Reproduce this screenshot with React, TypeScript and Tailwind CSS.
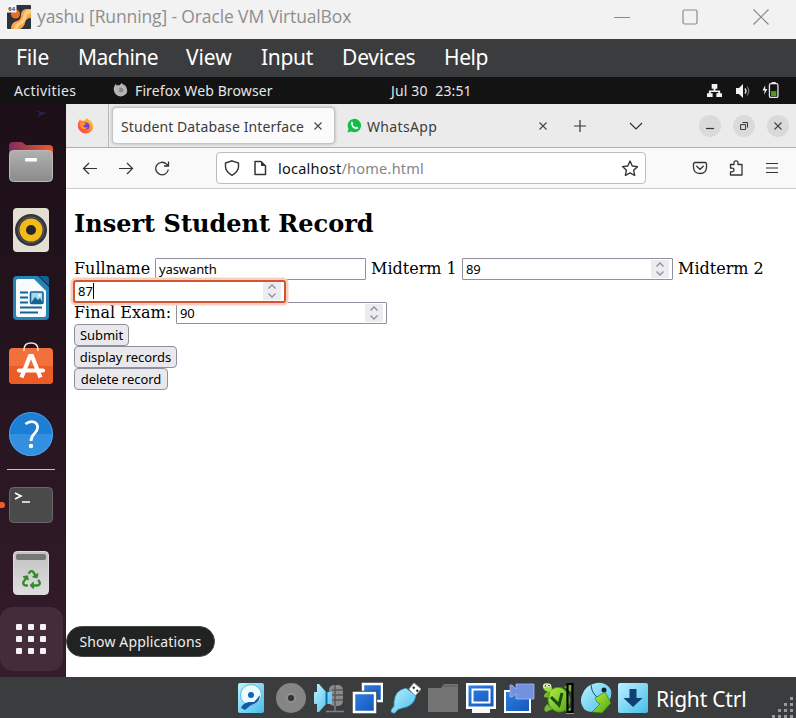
import React from 'react';
import { FaRecycle } from 'react-icons/fa';

const ui = "font-['Noto_Sans','Liberation_Sans',sans-serif]";

const Icon = ({ size = 16, box = 16, children, className = '' }: { size?: number; box?: number; children: React.ReactNode; className?: string }) => (
  <svg width={size} height={size} viewBox={`0 0 ${box} ${box}`} fill="none" className={`shrink-0 ${className}`}>
    {children}
  </svg>
);

function TitleBar() {
  return (
    <div className="flex h-[39px] items-center bg-[#f2f2f2] pb-[6px] text-[#8e8e8e]">
      <Icon size={24} box={24} className="ml-[7px]">
        <rect width="24" height="24" rx="1" fill="#2b3340" />
        <path d="M4 24Q4 17 10 16Q14 15 14 10Q14 5 19 4H24V13Q19 13 18 18Q17 22 13 24Z" fill="#f6a544" />
        <path d="M7 24Q7 19 12 17.500Q16 15 16.500 10Q17 6 20 5L24 4.500V8Q20 9 19 14Q17 19 13 20Q11 21 10.500 24Z" fill="#ffcb84" />
        <circle cx="8.500" cy="9" r="4.500" fill="#ee6c22" />
        <rect width="9.500" height="7.500" fill="#f8f8f8" />
        <text x="1.300" y="6" fontSize="6" fontWeight="bold" fill="#333" fontFamily="Liberation Sans">64</text>
      </Icon>
      <span className="ml-[6px] w-[560px] whitespace-nowrap font-['Open_Sans','Noto_Sans',sans-serif] text-[17.500px] tracking-[-0.13px]">yashu [Running] - Oracle VM VirtualBox</span>
      <div className="ml-[17px] flex items-center">
        <Icon size={16}><path d="M0 8.500H16" stroke="#8a8a8a" /></Icon>
        <Icon size={16} className="ml-[52px]"><rect x="1" y="1" width="14" height="14" rx="1.500" stroke="#8a8a8a" strokeWidth="1.200" /></Icon>
        <Icon size={16} className="ml-[55px]"><path d="M.5.5l15 15M15.500.5l-15 15" stroke="#8a8a8a" strokeWidth="1.200" /></Icon>
      </div>
    </div>
  );
}

function MenuBar() {
  return (
    <div className={`flex h-[38px] items-center whitespace-nowrap bg-[#3b3c3d] pl-4 text-[21px] text-white ${ui}`}>
      <span className="w-[62px] tracking-[-0.1px]">File</span>
      <span className="w-[108px] tracking-[-0.600px]">Machine</span>
      <span className="w-[75px] tracking-[-0.1px]">View</span>
      <span className="w-[81px] tracking-[-0.3px]">Input</span>
      <span className="w-[102px] tracking-[-0.2px]">Devices</span>
      <span className="tracking-[-0.4px]">Help</span>
    </div>
  );
}

function TopBar() {
  return (
    <div className={`flex h-[27px] items-center whitespace-nowrap bg-[#131313] text-[14px] text-[#e6e6e6] ${ui}`}>
      <span className="ml-[14px] w-[99px] tracking-[0.4px]">Activities</span>
      <Icon size={15} box={17} className="mb-[2px]">
        <path d="M1 6L3 2L4 4Q6 3 7 4L10 1Q11 3 14 4Q18 10 14.500 14Q11 17.500 6 16Q0 13 1 6Z" fill="#b5b5b5" />
        <path d="M6 7Q9 5 11 7.500T10 12Q7 12 6 10L8.500 8.500Z" fill="#858585" />
      </Icon>
      <span className="ml-[7px] w-[256px] tracking-[0.12px]">Firefox Web Browser</span>
      <span className="w-[316px] whitespace-pre tracking-[0.15px]">Jul 30  23:51</span>
      <Icon size={15}>
        <path d="M5 1h6v5H9v2h5v3h2v4h-6v-4h2V9.500H4V11h2v4H0v-4h2V8h5V6H5z" fill="#f2f2f2" />
      </Icon>
      <Icon size={16} className="ml-[13px]">
        <path d="M1 5h3l4-4v14l-4-4H1z" fill="#f2f2f2" />
        <path d="M10 5.500q2 2.500 0 5" stroke="#ddd" strokeWidth="1.400" />
        <path d="M12 3.500q3.500 4.500 0 9" stroke="#777" strokeWidth="1.200" />
      </Icon>
      <Icon size={17} className="mb-[2px] ml-[11px]">
        <path d="M3 4L.5 9H2.500L2 13L5 7.500H3Z" fill="#f2f2f2" />
        <rect x="7" y="2.500" width="8" height="13" rx="1.500" stroke="#e8e8e8" strokeWidth="1.200" />
        <path d="M9 1h4v1H9z" fill="#eee" />
        <rect x="8.500" y="9.500" width="5" height="4.700" fill="#4e9a26" />
      </Icon>
    </div>
  );
}

const Slot = ({ children }: { children: React.ReactNode }) => (
  <div className="flex h-[68px] w-[62px] items-center justify-center">{children}</div>
);

function Dock() {
  return (
    <div className="flex w-[66px] shrink-0 flex-col bg-linear-to-b from-[#1c0f17] via-[#25141f] to-[#351d2c]">
      <div className="flex h-6 justify-center pl-4 pt-[3px]">
        <Icon size={16}><path d="M0 3L14 6L4 10L7 6Z" fill="#25234d" /></Icon>
      </div>
      <Slot>
        <Icon size={48} box={48}>
          <defs>
            <linearGradient id="ft"><stop stopColor="#7e2d5e" /><stop offset="1" stopColor="#ef5a2a" /></linearGradient>
            <linearGradient id="fb" x2="0" y2="1"><stop stopColor="#b0b0b0" /><stop offset="1" stopColor="#8b8b8b" /></linearGradient>
          </defs>
          <path d="M2 18V8q0-4 4-4h8q2 0 3 1.500L19 7h23q4 0 4 4v7z" fill="url(#ft)" />
          <rect x="2.500" y="12.500" width="43" height="31" rx="4" fill="url(#fb)" stroke="#bbb" />
          <rect x="18" y="20" width="12" height="3.500" rx="1" fill="#fff" />
        </Icon>
      </Slot>
      <Slot>
        <Icon size={48} box={48}>
          <rect x="6" y="2" width="36" height="44" rx="4" fill="#e4dfd3" />
          <circle cx="24" cy="24" r="16" fill="#35363c" />
          <circle cx="24" cy="24" r="13" stroke="#595b62" strokeWidth="1" />
          <circle cx="24" cy="24" r="11.500" fill="#f2bb18" />
          <circle cx="24" cy="24" r="5" fill="#26272c" />
        </Icon>
      </Slot>
      <Slot>
        <Icon size={48} box={48}>
          <path d="M10 2H31L42 13V42q0 4-4 4H10q-4 0-4-4V6q0-4 4-4z" fill="#2683b5" />
          <path d="M11 5H27L39 17V41q0 2-2 2H11q-2 0-2-2V7q0-2 2-2z" fill="#f8fbfd" />
          <path d="M32 2H39q3 0 3 3V12z" fill="#13608f" />
          <path d="M13 18.500h8M13 23.500h8M13 28.500h8M13 33.500h22M13 38.500h18" stroke="#146394" strokeWidth="1.800" />
          <rect x="23.500" y="18" width="12.500" height="11.500" rx="1" fill="#a9d7ef" stroke="#146394" strokeWidth="1.600" />
          <path d="M24 29l4-6 3 3 2-2 3 5z" fill="#146394" /><circle cx="32.500" cy="21.500" r="1.200" fill="#fff" />
        </Icon>
      </Slot>
      <Slot>
        <Icon size={48} box={48}>
          <rect x="2" y="6" width="44" height="36" rx="4" fill="#f2703b" />
          <path d="M2 24H46V38q0 4-4 4H6q-4 0-4-4z" fill="#ec5c27" />
          <path d="M17 9V7.500q0-6.500 7-6.500T31 7.500V9" stroke="#ffe1d0" strokeWidth="1.500" />
          <path d="M14.500 35.500L23 14h2L33.500 35.500" stroke="#fff" strokeWidth="4.200" />
          <path d="M12 28.500H36" stroke="#fff" strokeWidth="4.200" strokeLinecap="round" />
        </Icon>
      </Slot>
      <Slot>
        <Icon size={48} box={48}>
          <circle cx="24" cy="24" r="22" fill="#1d7ed6" />
          <path d="M2 24a22 22 0 0044 0z" fill="#3390e0" />
          <circle cx="24" cy="24" r="21.500" stroke="#62aeea" strokeOpacity=".6" />
          <path d="M18.500 14Q23 10.500 27 12T30.500 18C30.500 23.500 24 23.500 24 31" stroke="#fff" strokeWidth="2.800" />
          <circle cx="24" cy="36" r="2.200" fill="#fff" />
        </Icon>
      </Slot>
      <div className="h-[3px] pl-[7px] pt-px"><div className="h-px w-12 bg-[#c9c0c6]" /></div>
      <div className="flex h-[68px] w-[62px] items-center">
        <div className="mr-[2px] h-[6px] w-[5px] shrink-0 rounded-r-full bg-[#ee5a2a]" />
        <Icon size={48} box={48}>
          <rect x="2.500" y="6.500" width="43" height="35" rx="4" fill="#4a4a4a" stroke="#686868" />
          <path d="M8 12l6 3-6 3M15 21h8" stroke="#fff" strokeWidth="1.600" />
        </Icon>
      </div>
      <Slot>
        <div className="flex h-11 w-9 flex-col items-center rounded-[4px] border border-[#dcdcdc] bg-linear-to-b from-[#c2c2c2] to-[#dedede] pt-[2px]">
          <div className="h-[6px] w-[30px] rounded-[2px] bg-[#777]" />
          <FaRecycle className="mt-[10px] text-[#358a2d]" size={19} />
        </div>
      </Slot>
      <div className="flex h-16 w-[63px] items-center justify-center rounded-[13px] bg-[#432d3b] pr-[2px]">
        <div className="grid grid-cols-3 gap-[6px]">
          {Array.from({ length: 9 }, (_, i) => <div key={i} className="size-[6px] rounded-[1px] bg-[#f5f2f4]" />)}
        </div>
      </div>
    </div>
  );
}

const Cross = ({ className = '' }) => <Icon size={8} box={8} className={className}><path d="M.5.5l7 7M7.500.5l-7 7" stroke="#444" strokeWidth="1.100" /></Icon>;

function FirefoxLogo() {
  return (
    <Icon size={17} box={17} className="ml-[11px]">
      <defs><linearGradient id="fx" x1="1" x2="0" y2="1"><stop stopColor="#ffe34a" /><stop offset=".45" stopColor="#ff8a26" /><stop offset="1" stopColor="#f42b5d" /></linearGradient></defs>
      <path d="M1 6L3 2L4 4Q6 3 7 4L10 1Q11 3 14 4Q18 10 14.500 14Q11 17.500 6 16Q0 13 1 6Z" fill="url(#fx)" />
      <circle cx="9" cy="9" r="3.500" fill="#7a3fd0" />
      <path d="M3 6q3-1 6 1-1 1-3 1.500 1 3 5 1.500-2 3-5.500 2Q3 10 3 6z" fill="#ff9634" />
    </Icon>
  );
}

const Round = ({ children, className }: { children: React.ReactNode; className: string }) => (
  <div className={`flex size-[22px] shrink-0 items-center justify-center rounded-full bg-[#dadada] ${className}`}>{children}</div>
);

function Tabs() {
  return (
    <div className={`flex h-11 items-center whitespace-nowrap border-b border-[#b1b1b1] bg-[#ebebeb] text-[14px] text-[#3c3c3f] ${ui}`}>
      <FirefoxLogo />
      <div className="ml-[14px] h-full w-px shrink-0 bg-[#b9b9b9]" />
      <div className="ml-[3px] flex h-[37px] w-[223px] shrink-0 items-center rounded-[4px] border border-[#c4c4c4] bg-[#fbfbfb] pl-2 shadow-[0_0_3px_#aaa]">
        <span className="w-[193px] pt-px tracking-[0.1px]">Student Database Interface</span>
        <Cross />
      </div>
      <Icon size={15} box={15} className="ml-[12px]">
        <path d="M.5 14.500L1.500 10.800A6.700 6.700 0 1 1 4.300 13.500Z" fill="#12bd48" />
        <path d="M4 5Q4 3.500 5.200 3.500L6.300 5.800L5.600 6.800Q6.500 8.600 8.200 9.300L9.200 8.400L11.300 9.500Q11.200 11.300 9.300 11.300Q4.200 10.500 4 5Z" fill="#fff" />
      </Icon>
      <span className="ml-[5px] w-[172px] pt-px tracking-[0.35px]">WhatsApp</span>
      <Cross />
      <Icon size={12} box={12} className="ml-[27px]"><path d="M6 0v12M0 6h12" stroke="#333" strokeWidth="1.200" /></Icon>
      <Icon size={14} box={14} className="ml-[43px]"><path d="M1 4l6 6 6-6" stroke="#333" strokeWidth="1.200" /></Icon>
      <Round className="ml-[56px]"><Icon size={8} box={8}><path d="M0 6.500h8" stroke="#333" strokeWidth="1.200" /></Icon></Round>
      <Round className="ml-3"><Icon size={8} box={8}><path d="M.6 2.600h5v5h-5zM2.500.5h5v5" stroke="#333" /></Icon></Round>
      <Round className="ml-3"><Cross /></Round>
    </div>
  );
}

function Toolbar() {
  return (
    <div className={`flex h-[41px] items-center border-b border-[#ccc] bg-[#f9f9fa] text-[14.500px] text-[#2b2a33] ${ui}`}>
      <Icon className="ml-4"><path d="M15 8.500H1.500M7 3L1.500 8.500L7 14" stroke="#333" strokeWidth="1.200" /></Icon>
      <Icon className="ml-5"><path d="M1 8.500h13.500M9 3L14.500 8.500L9 14" stroke="#333" strokeWidth="1.200" /></Icon>
      <Icon className="ml-5"><path d="M14.300 9.500A6.300 6.300 0 1 1 12.500 4.100L14 5.500M14.500 1.500V6H10" stroke="#333" strokeWidth="1.300" /></Icon>
      <div className="ml-[46px] flex h-8 w-[430px] shrink-0 items-center rounded-[4px] border border-[#bcbcc0] bg-white">
        <Icon className="ml-[7px]"><path d="M8 .8L14.500 3V7Q14 12 8 15.300Q2 12 1.500 7V3Z" stroke="#333" strokeWidth="1.400" /></Icon>
        <Icon className="ml-[12px]"><path d="M3 1.500H9L13.500 6V14.500H3Z" stroke="#333" strokeWidth="1.500" strokeLinejoin="round" /><path d="M9 1v5h5z" fill="#333" /></Icon>
        <span className="ml-[10px] w-[343px] whitespace-nowrap pt-px tracking-[0.24px] text-[#858585]"><span className="text-[#111]">localhost</span>/home.html</span>
        <Icon size={17}><path d="M8.500 1l2.100 4.600 5 .6-3.700 3.400 1 5L8.500 12.100 4.100 14.600l1-5L1.400 6.200l5-.6z" stroke="#333" strokeWidth="1.300" strokeLinejoin="round" /></Icon>
      </div>
      <Icon className="ml-[46px]"><path d="M3 2.500H13Q14.500 2.500 14.500 4V7Q14.500 13.500 8 13.500T1.500 7V4Q1.500 2.500 3 2.500Z" stroke="#333" strokeWidth="1.300" /><path d="M4.700 6.300L8 9.300l3.300-3" stroke="#333" strokeWidth="1.300" strokeLinecap="round" /></Icon>
      <Icon className="ml-[20px]"><path d="M2.500 4.500H6V3Q6 .9 8 .9T10 3V4.500h4V15H2.500V11.800H4.200Q6 11.800 6 10T4.200 8.200H2.500Z" stroke="#333" strokeWidth="1.300" strokeLinejoin="round" /></Icon>
      <Icon className="ml-[20px]"><path d="M2 3.500h12M2 8h12M2 12.500h12" stroke="#333" strokeWidth="1.200" /></Icon>
    </div>
  );
}

const Spinner = () => (
  <span className="flex h-[18px] w-[18px] shrink-0 items-center justify-center bg-[#ececf0]">
    <Icon size={14} box={14}><path d="M3.500 4.500L7 1l3.500 3.500M3.500 9.500L7 13l3.500-3.500" stroke="#8f8f9d" strokeWidth="1.300" /></Icon>
  </span>
);

function Field({ value, number, focus }: { value: string; number?: boolean; focus?: boolean }) {
  return (
    <span className={focus
      ? `relative z-10 -ml-px flex h-[23px] w-[213px] shrink-0 items-center rounded-[3px] border-2 border-[#cf5730] bg-white pl-[3px] pr-[3px] text-[13px] text-black shadow-[0_0_0_2.500px_#f9cdbf] ${ui}`
      : `flex h-[22px] w-[211px] shrink-0 items-center rounded-[1px] border border-[#8f8f9d] bg-white pl-[3px] pr-[3px] text-[13px] text-black ${ui}`}>
      <span className={focus ? 'border-r border-black leading-[16px]' : 'pt-[1px] leading-[17px] tracking-[-0.1px]'}>{value}</span>
      <span className="grow" />
      {number && <Spinner />}
    </span>
  );
}

const Button = ({ label, width }: { label: string; width: string }) => (
  <button className={`flex h-[22px] items-center justify-center whitespace-nowrap rounded-[4px] border border-[#8f8f9d] bg-[#e9e9ed] pt-[2px] text-[13px] tracking-[-0.05px] text-black ${width} ${ui}`}>{label}</button>
);

function Page() {
  return (
    <div className="flex grow flex-col bg-white pl-2 font-['DejaVu_Serif',serif] text-base text-black">
      <h2 className="mt-[21px] h-12 text-[24px] font-bold leading-[28px]">Insert Student Record</h2>
      <div className="flex h-[22px] items-center whitespace-nowrap">
        <span className="w-[81px]">Fullname</span>
        <Field value="yaswanth" />
        <span className="ml-[5px] w-[91px]">Midterm 1</span>
        <Field value="89" number />
        <span className="ml-[5px]">Midterm 2</span>
      </div>
      <div className="flex h-[22px] items-center"><Field value="87" number focus /></div>
      <div className="flex h-[22px] items-center whitespace-nowrap"><span className="w-[102px]">Final Exam:</span><Field value="90" number /></div>
      <Button label="Submit" width="w-[55px]" />
      <Button label="display records" width="w-[103px]" />
      <Button label="delete record" width="w-[94px]" />
    </div>
  );
}

const Status = ({ children }: { children: React.ReactNode }) => (
  <div className="flex w-[38.200px] shrink-0 items-center justify-center"><Icon size={32} box={32}>{children}</Icon></div>
);

function StatusBar() {
  return (
    <div className={`flex h-[41px] items-center bg-[#3b3c3d] pl-[233px] text-white ${ui}`}>
      <svg width="0" height="0"><defs>
        <linearGradient id="sky" x2="1" y2="1"><stop stopColor="#bdf2ff" /><stop offset="1" stopColor="#45bdea" /></linearGradient>
        <linearGradient id="blue" x2="1" y2="1"><stop stopColor="#3080df" /><stop offset="1" stopColor="#1256bf" /></linearGradient>
        <linearGradient id="lime" x2="1" y2="1"><stop stopColor="#b6ef45" /><stop offset="1" stopColor="#4ea611" /></linearGradient>
      </defs></svg>
      <Status><rect x="2" y="1" width="26" height="30" rx="2" fill="url(#sky)" /><circle cx="15" cy="13" r="10.500" fill="#e9fcff" stroke="#61b8dc" /><circle cx="15" cy="13" r="3" fill="#1665b5" /><path d="M24 13Q24 21 15 23L9 28L5 26Q7 21 13 20L18 20Q21 17 24 13Z" fill="#1557a8" /></Status>
      <Status><circle cx="17" cy="16" r="15" fill="#858585" /><circle cx="17" cy="16" r="3" fill="#333" /><circle cx="17" cy="16" r="4.500" stroke="#999" /></Status>
      <Status><g transform="translate(1)"><rect x="16" y="3" width="14" height="21" rx="5" fill="#8b8b8b" /><path d="M19 8h11M19 13h11M19 18h11M22 3v21" stroke="#5a5a5a" strokeWidth="1.500" /><path d="M22 24v5M13 29.500h18" stroke="#808080" strokeWidth="1.500" /><path d="M1 11q0-1 1-1h2V2h2l7 8h6v12h-6l-7 8H4v-8H2q-1 0-1-1z" fill="url(#sky)" /><path d="M13.500 10v12" stroke="#1769a5" strokeWidth="2" /></g></Status>
      <Status><g transform="translate(1)"><rect x="11" y="2" width="19" height="17" fill="url(#blue)" stroke="#fff" strokeWidth="2.500" /><rect x="2" y="11" width="21" height="19" stroke="#3b3c3d" strokeWidth="4.500" /><rect x="2" y="11" width="21" height="19" fill="url(#blue)" stroke="#fff" strokeWidth="2.500" /></g></Status>
      <Status><path d="M20 7l5-6 7 6-6 7z" fill="#fff" stroke="#aaa" /><path d="M24 5l1.500 1.500M27.500 8l1.500 1.500" stroke="#222" strokeWidth="2" /><path d="M17 6L27 14Q25 24 14 26L9 27.500L6 31Q2 32 2 28L5 24V20Q6 8 17 6Z" fill="url(#sky)" stroke="#278ab5" strokeWidth=".7" /></Status>
      <Status><path d="M1 6h13l3-4h14v28H1z" fill="#747474" /><path d="M17 3h13v2H16z" fill="#666" /></Status>
      <Status><rect x="1" y="1" width="30" height="26" fill="#fff" /><rect x="3.500" y="3.500" width="25" height="21" fill="url(#blue)" /><rect x="7.500" y="7.500" width="17" height="13" stroke="#fff" strokeWidth="2" /><path d="M7 27h18v4H7z" fill="#f8f8f8" /></Status>
      <Status><rect x="2" y="9" width="25" height="21" fill="url(#blue)" stroke="#fff" strokeWidth="2" /><path d="M7 3h2l4 4V2h18v15H13v-5l-4 3H7z" fill="#7292df" stroke="#a5baf0" strokeWidth=".8" /></Status>
      <Status>
        <path d="M8 9Q1 11 2 15L7 16ZM22 5L30 1L29 10ZM5 22Q0 28 4 30L11 27ZM20 27L27 31L29 26Z" fill="#76b92a" />
        <path d="M8 9Q13 4 20 6Q28 11 28 19Q26 30 17 30Q7 28 6 18Z" fill="url(#lime)" stroke="#4b991c" />
        <path d="M1 6Q0 1 5 1Q10 1 10 7L8 10Q3 10 1 6Z" fill="#9bdc42" />
        <circle cx="3" cy="4" r="1.800" fill="#fff" /><circle cx="7" cy="3.500" r="1.800" fill="#fff" /><circle cx="3.300" cy="4" r=".8" fill="#111" /><circle cx="7" cy="3.500" r=".8" fill="#111" />
        <path d="M9 15l8 8 3-12" stroke="#1b4c14" strokeWidth="3" />
        <path d="M25.500 2h5v28h-5z" stroke="#000" strokeWidth="2.200" /><path d="M24 31.500h8" stroke="#41da21" />
      </Status>
      <Status>
        <path d="M13 2Q25-2 31 8Q33 18 23 26Q13 33 5 28Q-2 20 3 11Q6 4 13 2Z" fill="url(#sky)" />
        <path d="M11 3Q12 14 21 17" stroke="#1c5178" /><circle cx="24" cy="8" r="2.500" fill="#123" />
        <path d="M15 16L25 10L31 21L22 31L12 30L20 22L17 20Z" fill="url(#lime)" stroke="#34801b" strokeWidth=".7" />
      </Status>
      <Status><rect y="1" width="30" height="30" rx="2" fill="url(#sky)" /><path d="M11.500 7h7v9h6L15 25 5.500 16h6z" fill="#0f4072" /></Status>
      <span className="ml-[3px] w-[116px] shrink-0 whitespace-nowrap pt-[5px] text-[21px] tracking-[-0.2px]">Right Ctrl</span>
      <Icon size={22} box={22} className="self-end"><path d="M18 1h3v3h-3zM18 7h3v3h-3zM12 7h3v3h-3zM18 13h3v3h-3zM12 13h3v3h-3zM6 13h3v3H6zM18 19h3v3h-3zM12 19h3v3h-3zM6 19h3v3H6zM0 19h3v3H0z" fill="#999" /></Icon>
    </div>
  );
}

export default function App() {
  return (
    <div className="relative flex h-[718px] w-[796px] flex-col overflow-hidden">
      <TitleBar />
      <MenuBar />
      <TopBar />
      <div className="flex h-[573px]">
        <Dock />
        <div className="flex w-[730px] flex-col"><Tabs /><Toolbar /><Page /></div>
      </div>
      <StatusBar />
      <div className={`absolute left-[66px] top-[626px] flex h-[31px] w-[149px] items-center justify-center whitespace-nowrap rounded-full border border-[#454745] bg-[#202321] text-[14px] tracking-[0.15px] text-[#eee] ${ui}`}>Show Applications</div>
    </div>
  );
}
